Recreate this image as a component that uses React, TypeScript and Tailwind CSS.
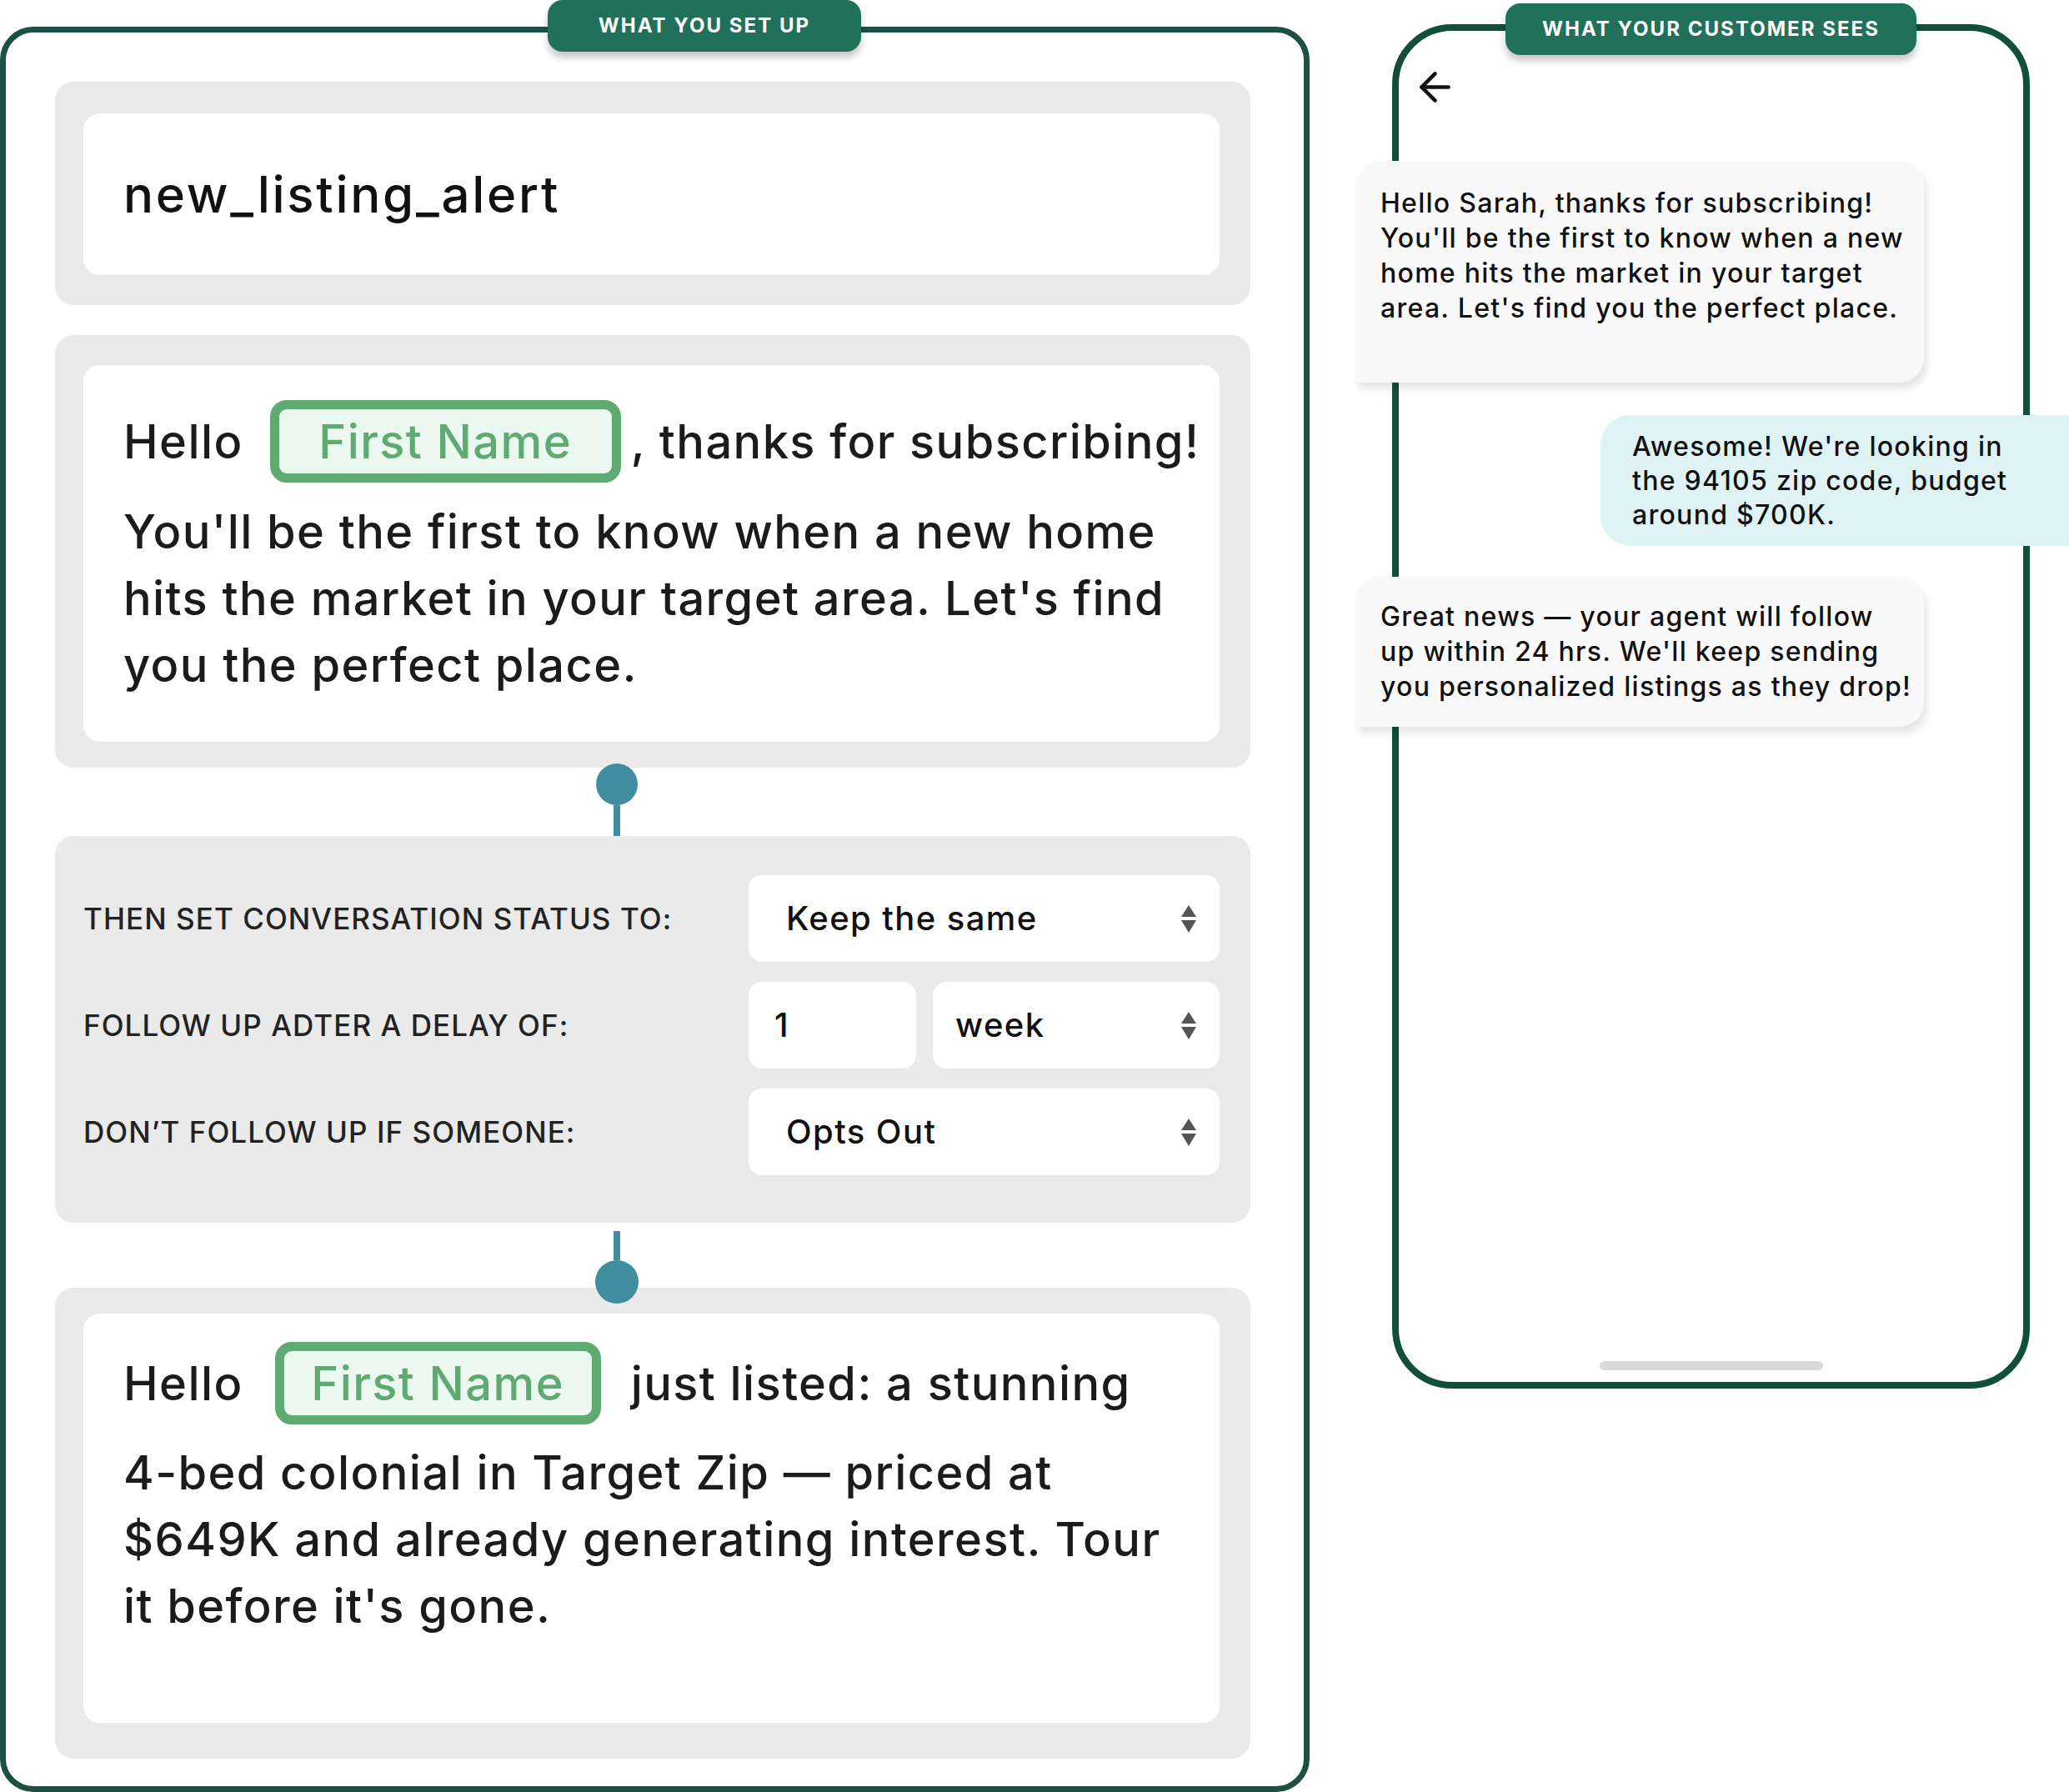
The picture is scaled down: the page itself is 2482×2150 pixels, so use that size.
import { ArrowLeft } from 'lucide-react';

/* ─── Small pieces ─────────────────────────────────────────── */
function SortArrows() {
  return (
    <svg width="18" height="33" viewBox="0 0 18 33" className="shrink-0">
      <path d="M9 0 L18 14 L0 14 Z" fill="#555" />
      <path d="M0 18 L18 18 L9 33 Z" fill="#555" />
    </svg>
  );
}

function Badge({ label, className }: { label: string; className: string }) {
  return (
    <div
      className={`absolute z-20 flex h-[62px] items-center justify-center rounded-[18px] bg-[#20705a] text-[24px] font-bold uppercase tracking-[0.085em] text-white shadow-[0_7px_8px_rgba(0,0,0,0.22)] ${className}`}
    >
      {label}
    </div>
  );
}

function Chip({ className }: { className: string }) {
  return (
    <span
      className={`inline-flex h-[99px] shrink-0 items-center justify-center rounded-[20px] border-[11px] border-[#5eaa71] bg-[#eaf8ef] text-[#5eaa71] ${className}`}
    >
      First Name
    </span>
  );
}

function Row({ label, children }: { label: string; children: React.ReactNode }) {
  return (
    <div className="flex items-center">
      <div className="flex-1 text-[35px] uppercase tracking-[0.03em] text-[#222]">{label}</div>
      <div className="flex w-[565px] gap-[20px]">{children}</div>
    </div>
  );
}

function Field({ value, arrows, className }: { value: string; arrows?: boolean; className: string }) {
  return (
    <div className={`flex h-[104px] items-center justify-between rounded-[16px] bg-white pr-[28px] ${className}`}>
      <span className="text-[40px] tracking-[0.035em] text-[#111]">{value}</span>
      {arrows && <SortArrows />}
    </div>
  );
}

/* ─── Page ─────────────────────────────────────────────────── */
export default function App() {
  return (
    <div className="flex h-[2150px] w-[2482px] items-start overflow-hidden bg-white font-['Inter',sans-serif] font-medium text-[#1b1b1b]">
      {/* ── Builder panel ── */}
      <div className="relative mt-[32px] h-[2118px] w-[1571px] shrink-0 rounded-[40px] border-[7px] border-[#1d4f42] pl-[59px] pt-[59px]">
        <Badge label="What you set up" className="left-[650px] top-[-39px] w-[376px]" />

        <div className="flex w-[1434px] flex-col">
          {/* template name */}
          <div className="h-[268px] rounded-[22px] bg-[#eaeaea] pl-[34px] pt-[38px]">
            <div className="flex h-[194px] w-[1363px] items-center rounded-[20px] bg-white pl-[48px] text-[60px] tracking-[0.045em] text-[#111]">
              new_listing_alert
            </div>
          </div>

          {/* first message */}
          <div className="mt-[36px] h-[519px] rounded-[22px] bg-[#eaeaea] pl-[34px] pt-[36px]">
            <div className="h-[452px] w-[1363px] rounded-[20px] bg-white pl-[48px] pt-[42px] text-[56px] leading-[80px] tracking-[0.025em]">
              <div className="flex items-center">
                <span>Hello</span>
                <Chip className="ml-[32px] w-[421px]" />
                <span className="ml-[12px]">, thanks for subscribing!</span>
              </div>
              <p className="mt-[19px]">
                You'll be the first to know when a new home
                <br />
                hits the market in your target area. Let's find
                <br />
                you the perfect place.
              </p>
            </div>
          </div>

          {/* connector */}
          <div className="relative z-10 flex h-[82px] flex-col pl-[649px]">
            <div className="-mt-[5px] h-[50px] w-[50px] shrink-0 rounded-full bg-[#418da0]" />
            <div className="ml-[21px] w-[8px] flex-1 bg-[#418da0]" />
          </div>

          {/* follow-up settings */}
          <div className="flex h-[464px] flex-col gap-[24px] rounded-[22px] bg-[#eaeaea] pl-[34px] pr-[37px] pt-[47px]">
            <Row label="Then set conversation status to:">
              <Field value="Keep the same" arrows className="flex-1 pl-[45px]" />
            </Row>
            <Row label="Follow up adter a delay of:">
              <Field value="1" className="w-[201px] pl-[31px]" />
              <Field value="week" arrows className="flex-1 pl-[27px]" />
            </Row>
            <Row label="Don’t follow up if someone:">
              <Field value="Opts Out" arrows className="flex-1 pl-[45px]" />
            </Row>
          </div>

          {/* connector */}
          <div className="relative z-10 flex h-[78px] flex-col pl-[648px]">
            <div className="ml-[22px] mt-[10px] h-[35px] w-[8px] shrink-0 bg-[#418da0]" />
            <div className="h-[52px] w-[52px] shrink-0 rounded-full bg-[#418da0]" />
          </div>

          {/* follow-up message */}
          <div className="h-[565px] rounded-[22px] bg-[#eaeaea] pl-[34px] pt-[31px]">
            <div className="h-[491px] w-[1363px] rounded-[20px] bg-white pl-[48px] pt-[34px] text-[56px] leading-[80px] tracking-[0.025em]">
              <div className="flex items-center">
                <span>Hello</span>
                <Chip className="ml-[38px] w-[391px]" />
                <span className="ml-[36px]">just listed: a stunning</span>
              </div>
              <p className="mt-[18px]">
                4-bed colonial in Target Zip — priced at
                <br />
                $649K and already generating interest. Tour
                <br />
                it before it's gone.
              </p>
            </div>
          </div>
        </div>
      </div>

      {/* ── Phone preview ── */}
      <div className="relative ml-[99px] mt-[29px] flex h-[1637px] w-[765px] shrink-0 flex-col rounded-[72px] border-[8px] border-[#0f4f3c] bg-white">
        <Badge label="What your customer sees" className="left-[128px] top-[-33px] w-[493px]" />

        <ArrowLeft size={55} strokeWidth={2} className="ml-[16px] mt-[40px] shrink-0 text-[#111]" />

        <div className="relative -ml-[52px] mt-[61px] h-[266px] w-[682px] shrink-0 rounded-[30px] rounded-bl-none bg-[#f9f9f9] pl-[30px] pt-[30px] text-[32px] leading-[42px] tracking-[0.04em] text-[#111] shadow-[4px_8px_10px_rgba(0,0,0,0.1)]">
          Hello Sarah, thanks for subscribing!
          <br />
          You'll be the first to know when a new
          <br />
          home hits the market in your target
          <br />
          area. Let's find you the perfect place.
        </div>

        <div className="relative ml-[242px] mt-[39px] flex h-[157px] w-[620px] shrink-0 items-center rounded-[36px] bg-[#dff3f4] pl-[38px] text-[32px] leading-[41px] tracking-[0.04em] text-[#111]">
          <p>
            Awesome! We're looking in
            <br />
            the 94105 zip code, budget
            <br />
            around $700K.
          </p>
        </div>

        <div className="relative -ml-[52px] mt-[37px] flex h-[180px] w-[682px] shrink-0 items-center rounded-[30px] rounded-bl-none bg-[#f9f9f9] pl-[30px] text-[32px] leading-[42px] tracking-[0.04em] text-[#111] shadow-[4px_8px_10px_rgba(0,0,0,0.1)]">
          <p>
            Great news — your agent will follow
            <br />
            up within 24 hrs. We'll keep sending
            <br />
            you personalized listings as they drop!
          </p>
        </div>

        <div className="mb-[14px] mt-auto h-[11px] w-[268px] shrink-0 self-center rounded-full bg-[#d9d9d9]" />
      </div>
    </div>
  );
}
